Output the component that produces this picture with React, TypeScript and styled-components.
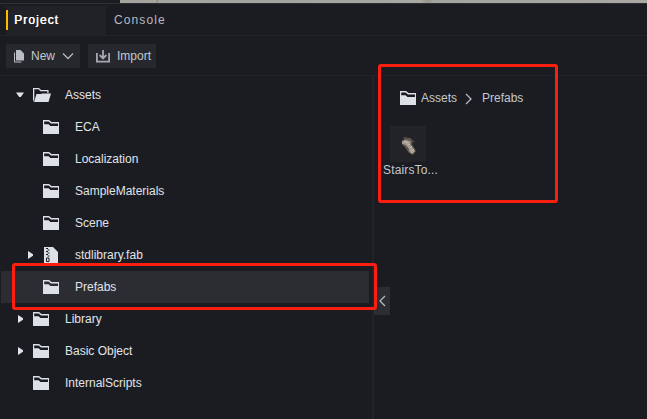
import React from "react";
import styled, { createGlobalStyle } from "styled-components";

const GlobalStyle = createGlobalStyle`
  body { margin: 0; background: #1b1c21; overflow: hidden; }
  * { box-sizing: border-box; }
`;

const Window = styled.div`
  position: relative;
  width: 647px;
  height: 419px;
  display: flex;
  flex-direction: column;
  background: #1b1c21;
  color: #e0e4ea;
  font: 12px/16px "Liberation Sans", Arial, sans-serif;
  overflow: hidden;
`;

const SceneEdge = styled.div`
  height: 4px;
  flex: none;
  padding-left: 120px;
  border-bottom: 1px solid #2e2f33;
`;

const SceneFloor = styled.div`
  height: 3px;
  background: linear-gradient(90deg, #a3a29d 0, #a5a49f 36px, #8d8980 37px, #a6a6a1 39px, #a1a39f 130px, #a8a8a4 300px, #98948a 309px, #a3a4a0 313px, #a9a8a3 100%);
`;

const TabBar = styled.div`
  height: 32px;
  flex: none;
  display: flex;
  align-items: stretch;
  padding: 2px 0 0 6px;
  border-bottom: 1px solid #222327;
`;

const Tab = styled.div<{ $active?: boolean }>`
  width: 100px;
  display: flex;
  align-items: center;
  padding-bottom: 1px;
  letter-spacing: 1.1px;
  gap: 6px;
  padding-left: ${(p) => (p.$active ? 0 : 8)}px;
  color: ${(p) => (p.$active ? "#ffffff" : "#b6bac2")};
  background: ${(p) => (p.$active ? "#212227" : "transparent")};
  text-shadow: ${(p) => (p.$active ? "0.4px 0 0 #ffffff" : "none")};
`;

const Marker = styled.span`
  width: 2px;
  height: 20px;
  background: #ffb800;
`;

const Toolbar = styled.div`
  height: 40px;
  flex: none;
  display: flex;
  gap: 8px;
  padding: 8px 6px;
  border-bottom: 1px solid #222327;
`;

const ToolButton = styled.button<{ $width: number }>`
  width: ${(p) => p.$width}px;
  height: 24px;
  display: flex;
  align-items: center;
  gap: 7px;
  padding: 0 0 0 8px;
  border: 0;
  background: #27282d;
  color: #c3c8d0;
  font: inherit;
  svg { flex: none; }
`;

const Body = styled.div`
  flex: 1;
  min-height: 0;
  display: flex;
`;

const Tree = styled.div`
  width: 372px;
  flex: none;
  padding: 3px 3px 0 1px;
`;

const Row = styled.div<{ $level: number; $selected?: boolean }>`
  height: 32px;
  width: 368px;
  display: flex;
  align-items: center;
  padding-left: ${(p) => 14 + p.$level * 10}px;
  background: ${(p) => (p.$selected ? "#2c2d32" : "transparent")};
`;

const ArrowSlot = styled.span`
  width: 18px;
  height: 10px;
  display: flex;
`;

const IconSlot = styled.span`
  width: 32px;
  height: 18px;
  display: flex;
  align-items: center;
`;

const Divider = styled.div`
  width: 2px;
  background: #222327;
`;

const Content = styled.div`
  flex: 1;
  position: relative;
  color: #c3c8d0;
`;

const Crumbs = styled.div`
  display: flex;
  align-items: center;
  height: 16px;
  margin: 14px 0 0 26px;
`;

const Crumb = styled.span<{ $gap?: number }>`
  margin-left: ${(p) => p.$gap ?? 5}px;
`;

const CrumbSeparator = styled.span`
  display: flex;
  margin: 1px 0 0 8px;
`;

const Asset = styled.div`
  width: 68px;
  margin-top: 20px;
  display: flex;
  flex-direction: column;
  align-items: center;
`;

const Thumb = styled.div`
  width: 36px;
  height: 36px;
  background: #222327;
`;

const AssetName = styled.div`
  width: 56px;
  margin-left: 6px;
  white-space: nowrap;
  letter-spacing: 0.15px;
`;

const Handle = styled.div`
  position: absolute;
  left: 0;
  top: 211px;
  width: 16px;
  height: 28px;
  background: #2c2d32;
  display: flex;
  align-items: center;
  justify-content: center;
`;

const Highlight = styled.div<{ $x: number; $y: number; $w: number; $h: number }>`
  position: absolute;
  left: ${(p) => p.$x}px;
  top: ${(p) => p.$y}px;
  width: ${(p) => p.$w}px;
  height: ${(p) => p.$h}px;
  border: 3px solid #fa1f10;
  border-radius: 3px;
`;

const Folder = () => (
  <svg width="16" height="14" viewBox="0 0 16 14">
    <path fill="#dce1e8" fillRule="evenodd" d="M0 0H6L8.5 2H16V14H0ZM1.2 1.6V4.3H5.6L7.4 6H15V3.4H8L5.6 1.6Z" />
  </svg>
);

const OpenFolder = () => (
  <svg width="18" height="14" viewBox="0 0 18 14">
    <path fill="#dce1e8" d="M0 0H6L8 2H15.5V5H14.3V3.2H7.4L5.5 1.3H1.3V11L0 14Z" />
    <path fill="#dce1e8" d="M3.5 6H8L9 5.5H18L15.5 14H1Z" />
  </svg>
);

const Archive = () => (
  <svg width="16" height="17" viewBox="-1 0 16 17">
    <path fill="#dce1e8" d="M0 0H9L14 5V17H0Z" />
    <path stroke="#1b1c21" strokeWidth="1.1" d="M2 1.5H4M3.5 3H5.5M2 4.5H4M3.5 6H5.5M2 7.5H4M3.5 9H5.5" />
    <path fill="none" stroke="#1b1c21" d="M2.5 11H5V14.5H2.5Z" />
  </svg>
);

const Arrow = ({ open }: { open?: boolean }) => (
  <svg width="10" height="10" viewBox="0 0 10 10">
    <path fill="#e0e4ea" d={open ? "M1 2.5H9L5.8 7H4.2Z" : "M3 1V9L8 5.8V4.2Z"} />
  </svg>
);

const Pages = () => (
  <svg width="10" height="13" viewBox="0 0 10 13">
    <path fill="#b9bec5" d="M2 0H6.5L10 3.5V10.5H2Z" />
    <path fill="none" stroke="#b9bec5" d="M.5 2.5V12H7.5" />
  </svg>
);

const Download = () => (
  <svg width="14" height="14" viewBox="0 0 14 14" fill="none" stroke="#a5a9b0" strokeWidth="1.8">
    <path d="M.9 4V12.6H13.1V4M7 1V9M3.6 6L7 9.4L10.4 6" />
  </svg>
);

const Chevron = ({ d, w, h }: { d: string; w: number; h: number }) => (
  <svg width={w} height={h} viewBox={`0 0 ${w} ${h}`} fill="none" stroke="#b5b9c0" strokeWidth="1.3">
    <path d={d} />
  </svg>
);

const Stairs = () => (
  <svg width="36" height="36" viewBox="0 0 36 36">
    <path fill="#5e5750" d="M12 15L15 12L20 12L23 15L22 18L26 25L23 29L19 27L14 20Z" />
    <path fill="#a69b90" d="M12 15L17 14L21 16L20 18L25 25L22 28L19 25L16 19L12 18Z" />
    <path stroke="#c9bcaf" d="M14 15L18 17M18 19L20 18M20 22L22 20M21 25L24 23M22 27L24 25" />
    <path stroke="#504b47" d="M13 12L17 11M20 12L22 14M23 15L25 16M12 18L14 20M17 21L19 24" />
  </svg>
);

type Kind = "folder" | "open" | "archive";
const entries: { name: string; level: number; kind: Kind; arrow?: "open" | "closed"; selected?: boolean }[] = [
  { name: "Assets", level: 0, kind: "open", arrow: "open" },
  { name: "ECA", level: 1, kind: "folder" },
  { name: "Localization", level: 1, kind: "folder" },
  { name: "SampleMaterials", level: 1, kind: "folder" },
  { name: "Scene", level: 1, kind: "folder" },
  { name: "stdlibrary.fab", level: 1, kind: "archive", arrow: "closed" },
  { name: "Prefabs", level: 1, kind: "folder", selected: true },
  { name: "Library", level: 0, kind: "folder", arrow: "closed" },
  { name: "Basic Object", level: 0, kind: "folder", arrow: "closed" },
  { name: "InternalScripts", level: 0, kind: "folder" },
];

const icons = { folder: <Folder />, open: <OpenFolder />, archive: <Archive /> };

export default function App() {
  return (
    <>
      <GlobalStyle />
      <Window>
        <SceneEdge><SceneFloor /></SceneEdge>
        <TabBar>
          <Tab $active><Marker />Project</Tab>
          <Tab>Console</Tab>
        </TabBar>
        <Toolbar>
          <ToolButton $width={74}><Pages />New<Chevron w={12} h={8} d="M1 1.5L6 6.5L11 1.5" /></ToolButton>
          <ToolButton $width={68}><Download />Import</ToolButton>
        </Toolbar>
        <Body>
          <Tree>
            {entries.map((e) => (
              <Row key={e.name} $level={e.level} $selected={e.selected}>
                <ArrowSlot>{e.arrow && <Arrow open={e.arrow === "open"} />}</ArrowSlot>
                <IconSlot>{icons[e.kind]}</IconSlot>
                {e.name}
              </Row>
            ))}
          </Tree>
          <Divider />
          <Content>
            <Crumbs>
              <Folder />
              <Crumb>Assets</Crumb>
              <CrumbSeparator><Chevron w={7} h={12} d="M1 1L6 6L1 11" /></CrumbSeparator>
              <Crumb $gap={10}>Prefabs</Crumb>
            </Crumbs>
            <Asset>
              <Thumb><Stairs /></Thumb>
              <AssetName>StairsTo...</AssetName>
            </Asset>
            <Handle><Chevron w={7} h={12} d="M6 1L1 6L6 11" /></Handle>
          </Content>
        </Body>
        <Highlight $x={12} $y={263} $w={365} $h={47} />
        <Highlight $x={378} $y={64} $w={180} $h={139} />
      </Window>
    </>
  );
}
